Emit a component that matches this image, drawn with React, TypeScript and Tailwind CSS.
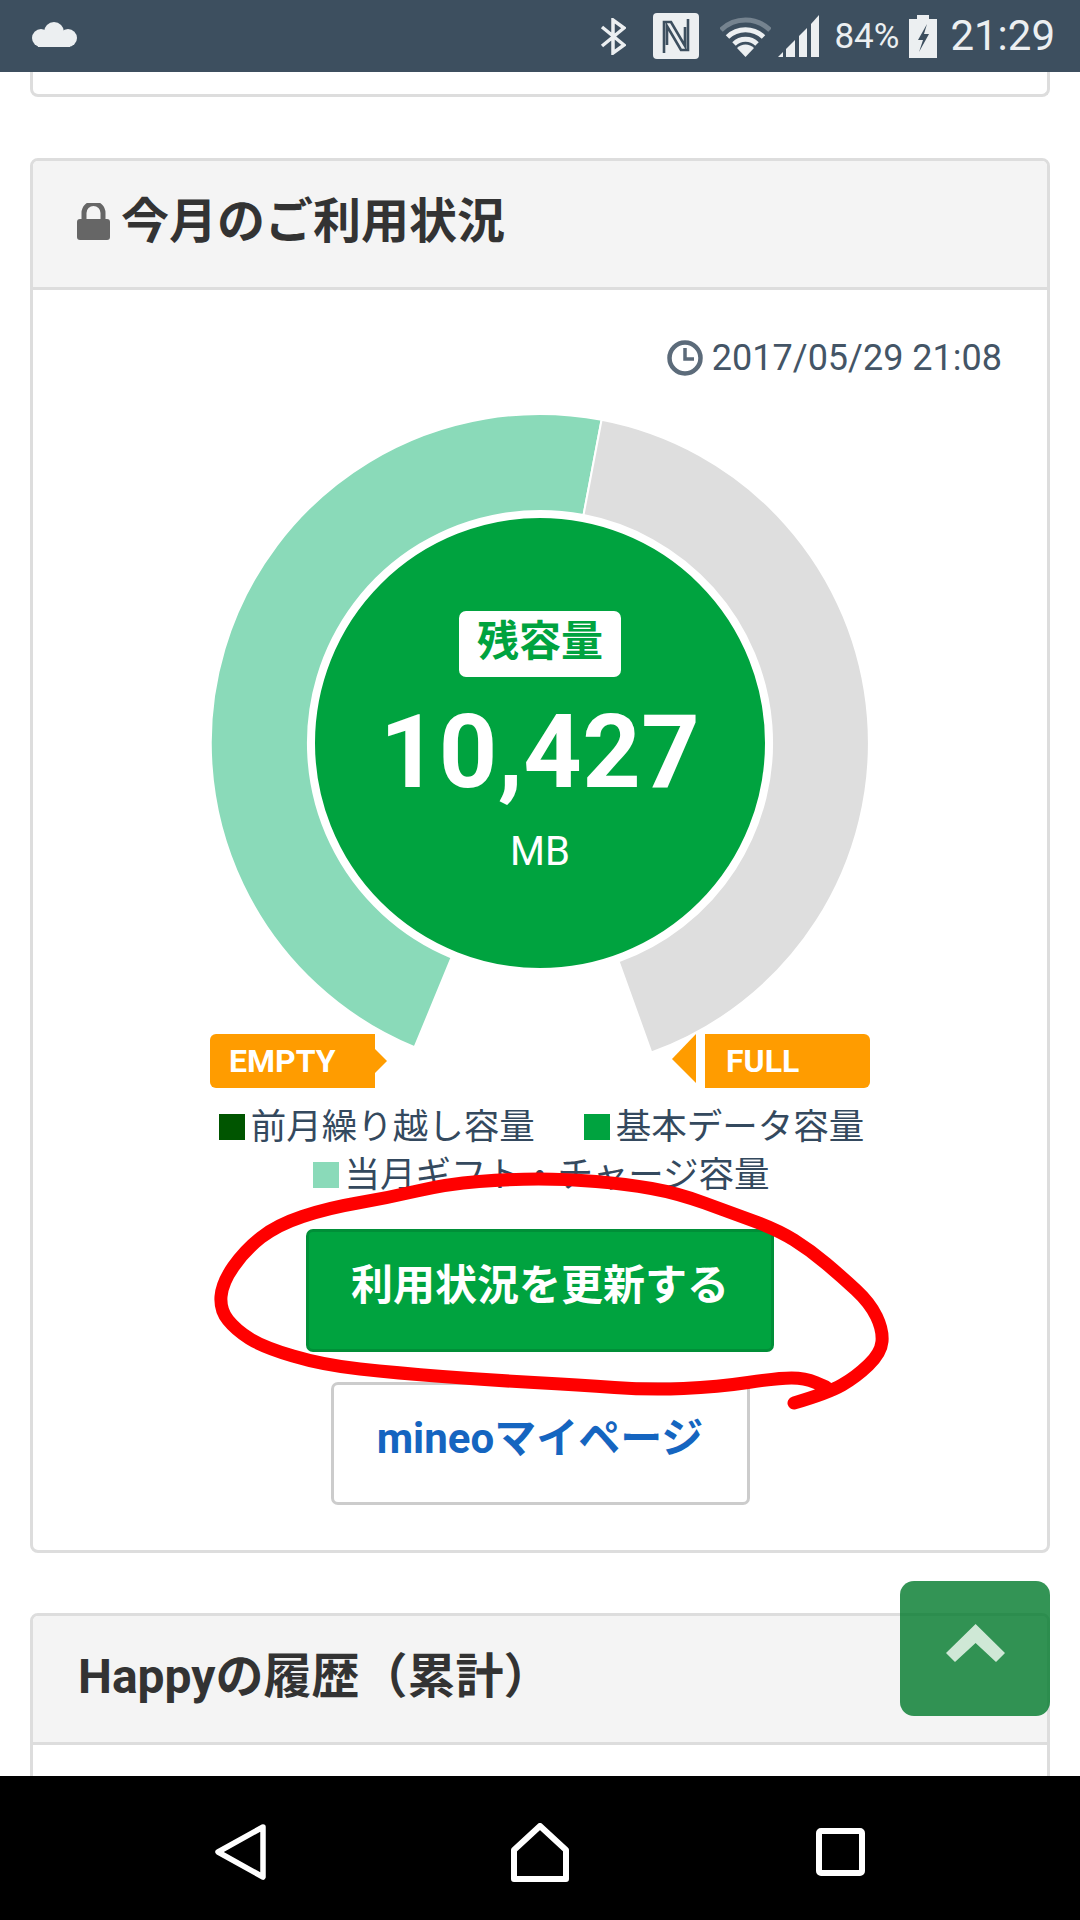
const JP = 'font-["Roboto","Noto_Sans_CJK_JP",sans-serif]'

// angle in degrees, clockwise from 12 o'clock
function polar(r: number, deg: number, cx = 330, cy = 365) {
  const a = (deg * Math.PI) / 180
  return `${(cx + r * Math.sin(a)).toFixed(1)} ${(cy - r * Math.cos(a)).toFixed(1)}`
}

function ring(from: number, to: number, outer = 329, inner = 232) {
  const big = to - from > 180 ? 1 : 0
  return `M${polar(outer, from)} A${outer} ${outer} 0 ${big} 1 ${polar(outer, to)} L${polar(inner, to)} A${inner} ${inner} 0 ${big} 0 ${polar(inner, from)} Z`
}

const scribble: [number, number][] = [
  [794, 1403], [828, 1393], [856, 1377], [881, 1353], [883, 1330], [870, 1303], [842, 1277], [810, 1250],
  [778, 1230], [732, 1213], [677, 1193], [626, 1184], [566, 1179], [511, 1179], [447, 1184], [387, 1198],
  [328, 1208], [277, 1225], [245, 1250], [222, 1283], [220, 1310], [236, 1330], [263, 1347], [323, 1365],
  [397, 1373], [488, 1380], [580, 1385], [649, 1390], [718, 1387], [778, 1378], [805, 1378], [826, 1387],
]

function smooth(pts: [number, number][]) {
  let d = `M${pts[0][0]} ${pts[0][1]}`
  for (let i = 1; i < pts.length - 1; i++) {
    const mx = (pts[i][0] + pts[i + 1][0]) / 2
    const my = (pts[i][1] + pts[i + 1][1]) / 2
    d += ` Q${pts[i][0]} ${pts[i][1]} ${mx} ${my}`
  }
  const last = pts[pts.length - 1]
  return `${d} L${last[0]} ${last[1]}`
}

function StatusBar() {
  return (
    <div className="h-[72px] shrink-0 bg-[#3d4f5f] flex items-center pl-[30px] text-[#eceff1] font-['Roboto',sans-serif]">
      <svg width="48" height="25" viewBox="0 0 48 25" fill="#eceff1" className="mb-[3px]">
        <circle cx="24" cy="10" r="10" />
        <circle cx="11" cy="16" r="9" />
        <circle cx="38" cy="16" r="9" />
        <rect x="8" y="14" width="32" height="11" />
      </svg>
      <div className="ml-auto flex items-center">
        <svg width="26" height="37" viewBox="0 0 26 37" fill="none" stroke="#eceff1" strokeWidth="3.500">
          <path d="M2 9 L24 27 L13 35 V2 L24 10 L2 28" />
        </svg>
        <svg width="46" height="46" viewBox="0 0 46 46" className="ml-[27px]">
          <rect width="46" height="46" rx="4" fill="#eceff1" />
          <path d="M11 40 V9 H18 L32 33 V14 M35 6 V37 H28 L14 13 V32" fill="none" stroke="#3d4f5f" strokeWidth="2.600" />
        </svg>
        <svg width="51" height="41" viewBox="0 0 51 41" fill="none" strokeWidth="5" className="ml-[21px]">
          <path d="M1 14 A35 35 0 0 1 50 14" stroke="#75838f" />
          <path d="M7.500 21 A26 26 0 0 1 43.500 21" stroke="#eceff1" />
          <path d="M14 28 A16.500 16.500 0 0 1 37 28" stroke="#eceff1" />
          <path d="M25.500 41 L17 32 A12 12 0 0 1 34 32 Z" fill="#eceff1" />
        </svg>
        <svg width="41" height="42" viewBox="0 0 41 42" fill="#eceff1" className="ml-[7px]">
          <polygon points="0,42 5,37 5,42" />
          <polygon points="8,34 17,25 17,42 8,42" />
          <polygon points="21,21 29,13 29,42 21,42" />
          <polygon points="33,9 41,0 41,42 33,42" />
        </svg>
        <span className="ml-[15px] text-[35px] leading-none">84%</span>
        <svg width="28" height="43" viewBox="0 0 28 43" className="ml-[10px]">
          <rect x="8" width="12" height="5" fill="#eceff1" />
          <rect y="4" width="28" height="39" fill="#eceff1" />
          <polygon points="18,9 9,25 14,25 10,37 20,19 15,19" fill="#3d4f5f" />
        </svg>
        <span className="ml-[13px] mr-[25px] text-[42px] leading-none">21:29</span>
      </div>
    </div>
  )
}

function CardHeader({ title, lock }: { title: string; lock?: boolean }) {
  return (
    <div className={`h-[129px] bg-[#f4f4f4] border-b-[3px] border-[#ddd] flex items-center pb-[5px] ${lock ? 'pl-[44px]' : 'pl-[45px]'}`}>
      {lock && (
        <svg width="33" height="37" viewBox="0 0 33 37" className="mr-[11px] shrink-0">
          <path d="M7 18 V10 A9.500 9.500 0 0 1 26 10 V18" fill="none" stroke="#666" strokeWidth="5" />
          <rect y="16" width="33" height="21" rx="3" fill="#666" />
        </svg>
      )}
      <h2 className={`${JP} text-[48px] leading-none font-bold text-[#333]`}>{title}</h2>
    </div>
  )
}

function Gauge() {
  return (
    <div className="relative h-[656px]">
      <svg width="660" height="656" viewBox="0 0 660 656" className="block mx-auto overflow-visible">
        <path d={ring(202.4, 370.8)} fill="#8adab9" stroke="#fff" strokeWidth="2" />
        <path d={ring(10.8, 160.2)} fill="#dedede" stroke="#fff" strokeWidth="2" />
      </svg>
      <div className="absolute top-[133px] left-1/2 -translate-x-1/2 w-[464px] h-[464px] rounded-full bg-[#00a33f] border-[7px] border-white flex flex-col items-center pt-[93px] text-white">
        <div className={`${JP} w-[162px] h-[66px] rounded-[7px] bg-white text-[#00a33f] text-[42px] font-bold leading-none flex items-center justify-center pb-[4px]`}>残容量</div>
        <div className="font-['Roboto',sans-serif] font-bold text-[102px] leading-none mt-[24px] tracking-[0.5px]">10,427</div>
        <div className="font-['Roboto',sans-serif] text-[40px] leading-none mt-[29px]">MB</div>
      </div>
    </div>
  )
}

function Tags() {
  return (
    <div className="w-[660px] h-[54px] mx-auto flex justify-between font-['Roboto',sans-serif] font-bold text-[32px] text-white">
      <div className="flex items-center">
        <div className="w-[165px] h-full bg-[#ff9c00] rounded-l-[6px] flex items-center pl-[19px] pb-[1px]">EMPTY</div>
        <svg width="12" height="24" viewBox="0 0 12 24" fill="#ff9c00">
          <polygon points="0,0 12,12 0,24" />
        </svg>
      </div>
      <div className="flex items-start">
        <svg width="24" height="49" viewBox="0 0 24 49" fill="#ff9c00" className="mr-[9px]">
          <polygon points="24,0 0,25 24,49" />
        </svg>
        <div className="w-[165px] h-full bg-[#ff9c00] rounded-r-[6px] flex items-center pl-[21px] pb-[1px]">FULL</div>
      </div>
    </div>
  )
}

function LegendItem({ color, label }: { color: string; label: string }) {
  return (
    <div className="flex items-center">
      <span className="w-[26px] h-[26px] mr-[6px] shrink-0" style={{ backgroundColor: color }} />
      <span>{label}</span>
    </div>
  )
}

function Legend() {
  return (
    <div className={`${JP} mt-[15px] text-[35.5px] leading-[48px] text-[#34495e]`}>
      <div className="flex justify-center gap-[49px] pl-[3px]">
        <LegendItem color="#005500" label="前月繰り越し容量" />
        <LegendItem color="#00a33f" label="基本データ容量" />
      </div>
      <div className="flex justify-center pl-[2px]">
        <LegendItem color="#8adab9" label="当月ギフト・チャージ容量" />
      </div>
    </div>
  )
}

export default function App() {
  return (
    <div className="relative w-[1080px] h-[1920px] overflow-hidden bg-white flex flex-col">
      <StatusBar />

      <main className="flex-1 overflow-hidden px-[30px]">
        <div className="h-[25px] border-x-[3px] border-b-[3px] border-[#ddd] rounded-b-[8px]" />

        <section className="mt-[61px] border-[3px] border-[#ddd] rounded-[8px] overflow-hidden">
          <CardHeader title="今月のご利用状況" lock />
          <div className="pt-[48px] pb-[45px]">
            <div className="flex items-center justify-end pr-[45px] h-[40px] font-['Roboto',sans-serif] text-[36px] text-[#445566]">
              <svg width="36" height="36" viewBox="0 0 36 36" fill="none" stroke="#5c6b7a" strokeWidth="4.500" className="mr-[9px]">
                <circle cx="18" cy="18" r="15.500" />
                <path d="M18 8 V19 H27" strokeWidth="3.500" />
              </svg>
              2017/05/29 21:08
            </div>
            <Gauge />
            <Tags />
            <Legend />
            <button className={`${JP} block mx-auto mt-[30px] w-[468px] h-[123px] pb-[10px] rounded-[7px] bg-[#00a33f] border-[3px] border-[#008f38] text-white text-[42px] font-bold`}>利用状況を更新する</button>
            <button className={`${JP} block mx-auto mt-[30px] w-[419px] h-[123px] pb-[10px] rounded-[7px] bg-white border-[3px] border-[#ccc] text-[#1565c0] text-[42px] font-bold`}>mineoマイページ</button>
          </div>
        </section>

        <section className="mt-[60px] h-[400px] border-[3px] border-[#ddd] rounded-[8px] overflow-hidden">
          <CardHeader title="Happyの履歴（累計）" />
        </section>
      </main>

      <nav className="h-[144px] shrink-0 bg-black flex items-center pl-[215px] pt-[8px]">
        <svg width="51" height="56" viewBox="0 0 51 56" fill="none" stroke="#fff" strokeWidth="5.500" strokeLinejoin="round">
          <polygon points="48,3 3,28 48,53" />
        </svg>
        <svg width="58" height="59" viewBox="0 0 58 59" fill="none" stroke="#fff" strokeWidth="6" strokeLinejoin="round" className="ml-[245px]">
          <polygon points="29,3 55,27 55,56 3,56 3,27" />
        </svg>
        <svg width="49" height="48" viewBox="0 0 49 48" fill="none" stroke="#fff" strokeWidth="6" className="ml-[247px]">
          <rect x="3" y="3" width="43" height="42" rx="2" />
        </svg>
      </nav>

      {/* back to top, floats over the page */}
      <div className="absolute left-[900px] top-[1581px] w-[150px] h-[135px] rounded-[14px] bg-[#00792a]/80 flex items-center justify-center pb-[12px]">
        <svg width="59" height="38" viewBox="0 0 59 38" fill="#cfe8d6">
          <polygon points="29.600,0 59,29 50,38 29.600,19 9,38 0,29" />
        </svg>
      </div>

      {/* hand drawn red marker on top of the screenshot */}
      <svg width="1080" height="1920" viewBox="0 0 1080 1920" fill="none" className="absolute inset-0 pointer-events-none">
        <path d={smooth(scribble)} stroke="#ff0000" strokeWidth="13" strokeLinecap="round" strokeLinejoin="round" />
      </svg>
    </div>
  )
}
